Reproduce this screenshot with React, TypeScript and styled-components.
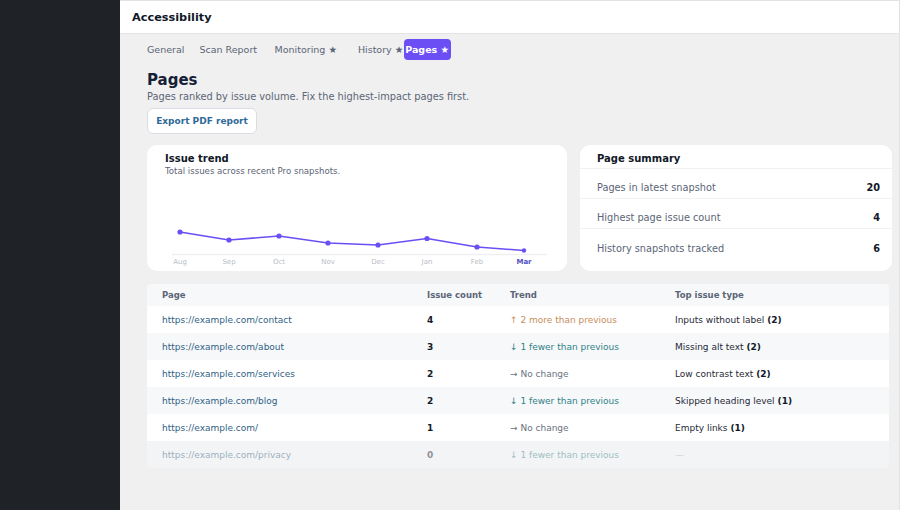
import React from "react";
import styled, { createGlobalStyle } from "styled-components";

const Global = createGlobalStyle`
  html, body { margin: 0; padding: 0; }
  body { font-family: "DejaVu Sans", Verdana, sans-serif; background: #f0f0f0; }
  * { box-sizing: border-box; }
`;

const Shell = styled.div`
  display: flex;
  width: 900px;
  height: 510px;
  overflow: hidden;
`;

const Sidebar = styled.aside`
  width: 120px;
  flex: none;
  background: #1f2327;
`;

const Main = styled.main`
  flex: 1;
  display: flex;
  flex-direction: column;
  background: #f0f0f0;
  border-top: 1px solid #e2e2e2;
  border-right: 1px solid #e2e2e2;
`;

const Header = styled.header`
  height: 33px;
  background: #ffffff;
  border-bottom: 1px solid #e4e4e4;
  display: flex;
  align-items: center;
  padding: 1px 0 0 12px;
  font-size: 11.3px;
  font-weight: 700;
  color: #111827;
`;

const Content = styled.div`
  padding: 4px 0 0 27px;
  display: flex;
  flex-direction: column;
`;

const Tabs = styled.nav`
  display: flex;
  align-items: center;
  height: 22px;
`;

const Tab = styled.span<{ $active?: boolean; $ml?: number }>`
  font-size: 9.5px;
  margin-left: ${(p) => p.$ml ?? 0}px;
  padding: ${(p) => (p.$active ? "0 2px 0 1px" : "0")};
  line-height: 21px;
  border-radius: 4px;
  color: ${(p) => (p.$active ? "#ffffff" : "#5b6576")};
  background: ${(p) => (p.$active ? "#6c4ef5" : "transparent")};
  font-weight: ${(p) => (p.$active ? 700 : 400)};
  white-space: pre;
`;

const Title = styled.h1`
  margin: 10px 0 0;
  font-size: 15px;
  font-weight: 700;
  color: #162036;
  line-height: 20px;
`;

const Sub = styled.p`
  margin: 0;
  font-size: 9.8px;
  color: #5b6576;
  line-height: 13px;
`;

const ExportButton = styled.button`
  margin-top: 5px;
  align-self: flex-start;
  height: 26px;
  width: 110px;
  padding: 0;
  background: #ffffff;
  border: 1px solid #d9dde3;
  border-radius: 6px;
  font-family: inherit;
  font-size: 9px;
  font-weight: 700;
  color: #2f6a99;
`;

const Cards = styled.div`
  margin-top: 11px;
  display: grid;
  grid-template-columns: 420px 312px;
  gap: 13px;
`;

const Card = styled.section`
  background: #ffffff;
  border-radius: 10px;
  height: 126px;
`;

const TrendCard = styled(Card)`
  padding: 7px 18px 0;
`;

const CardTitle = styled.h2`
  margin: 0;
  font-size: 10px;
  font-weight: 700;
  color: #111827;
  line-height: 13px;
`;

const CardSub = styled.p`
  margin: 0;
  font-size: 8.6px;
  color: #5b6576;
  line-height: 12px;
`;

const SummaryHead = styled.div`
  padding: 7px 17px 0;
  height: 24px;
  border-bottom: 1px solid #f1f2f4;
`;

const SummaryRow = styled.div<{ $last?: boolean }>`
  height: 30px;
  display: flex;
  align-items: center;
  justify-content: space-between;
  padding: 8px 12px 0 17px;
  border-bottom: ${(p) => (p.$last ? "none" : "1px solid #f1f2f4")};
  font-size: 9.75px;
  color: #5b6576;
  & > b { color: #111827; }
`;

const Table = styled.div`
  margin-top: 13px;
  width: 742px;
  border-radius: 4px;
  overflow: hidden;
`;

const Row = styled.div<{ $bg: string; $h: number; $muted?: boolean }>`
  display: grid;
  grid-template-columns: 265px 83px 165px 1fr;
  align-items: center;
  padding-left: 15px;
  height: ${(p) => p.$h}px;
  background: ${(p) => p.$bg};
  font-size: 9px;
  opacity: ${(p) => (p.$muted ? 0.45 : 1)};
`;

const HeadCell = styled.span`
  font-size: 8.5px;
  font-weight: 700;
  color: #5b6576;
`;

const PageLink = styled.span`
  color: #2f5f86;
`;

const Count = styled.span`
  font-weight: 700;
  color: #111827;
`;

const TrendText = styled.span<{ $c: string }>`
  color: ${(p) => p.$c};
`;

const IssueType = styled.span`
  color: #1f2937;
  & > b { color: #111827; }
`;

const Dash = styled.span`
  color: #9ca3af;
`;

const points = [
  { m: "Aug", x: 180, y: 232 },
  { m: "Sep", x: 229, y: 240 },
  { m: "Oct", x: 279, y: 236 },
  { m: "Nov", x: 328, y: 243 },
  { m: "Dec", x: 378, y: 245 },
  { m: "Jan", x: 427, y: 238.5 },
  { m: "Feb", x: 477, y: 247 },
  { m: "Mar", x: 524, y: 250.5 },
];

const OX = 165;
const OY = 177;

function Chart() {
  const pts = points.map((p) => ({ ...p, x: p.x - OX, y: p.y - OY }));
  const d = pts.map((p, i) => `${i ? "L" : "M"}${p.x} ${p.y}`).join(" ");
  return (
    <svg width="384" height="90" style={{ display: "block" }}>
      <line x1={172 - OX} x2={547 - OX} y1={254.5 - OY} y2={254.5 - OY} stroke="#eef0f3" strokeWidth="1.5" />
      <path d={d} fill="none" stroke="#6c4ef5" strokeWidth="1.6" strokeLinejoin="round" />
      {pts.map((p, i) => (
        <circle key={p.m} cx={p.x} cy={p.y} r={i === pts.length - 1 ? 2.2 : 2.6} fill="#6c4ef5" />
      ))}
      {pts.map((p, i) => (
        <text
          key={p.m + "t"}
          x={p.x}
          y={264 - OY}
          textAnchor="middle"
          fontSize="7"
          fontFamily="DejaVu Sans, sans-serif"
          fontWeight={i === pts.length - 1 ? 700 : 400}
          fill={i === pts.length - 1 ? "#4f4fc4" : "#b9bec7"}
        >
          {p.m}
        </text>
      ))}
    </svg>
  );
}

const UP = "#c98e5c";
const DOWN = "#2f8287";
const FLAT = "#6b7280";

const rows = [
  { url: "https://example.com/contact", n: 4, t: "↑ 2 more than previous", c: UP, issue: "Inputs without label", k: 2 },
  { url: "https://example.com/about", n: 3, t: "↓ 1 fewer than previous", c: DOWN, issue: "Missing alt text", k: 2 },
  { url: "https://example.com/services", n: 2, t: "→ No change", c: FLAT, issue: "Low contrast text", k: 2 },
  { url: "https://example.com/blog", n: 2, t: "↓ 1 fewer than previous", c: DOWN, issue: "Skipped heading level", k: 1 },
  { url: "https://example.com/", n: 1, t: "→ No change", c: FLAT, issue: "Empty links", k: 1 },
  { url: "https://example.com/privacy", n: 0, t: "↓ 1 fewer than previous", c: DOWN, issue: "", k: 0 },
];

export default function App() {
  return (
    <>
      <Global />
      <Shell>
        <Sidebar />
        <Main>
          <Header>Accessibility</Header>
          <Content>
            <Tabs>
              <Tab>General</Tab>
              <Tab $ml={15}>Scan Report</Tab>
              <Tab $ml={17.5}>Monitoring ★</Tab>
              <Tab $ml={21}>History ★</Tab>
              <Tab $active $ml={1}>Pages ★</Tab>
            </Tabs>
            <Title>Pages</Title>
            <Sub>Pages ranked by issue volume. Fix the highest-impact pages first.</Sub>
            <ExportButton>Export PDF report</ExportButton>
            <Cards>
              <TrendCard>
                <CardTitle>Issue trend</CardTitle>
                <CardSub>Total issues across recent Pro snapshots.</CardSub>
                <Chart />
              </TrendCard>
              <Card>
                <SummaryHead>
                  <CardTitle>Page summary</CardTitle>
                </SummaryHead>
                <SummaryRow>
                  <span>Pages in latest snapshot</span>
                  <b>20</b>
                </SummaryRow>
                <SummaryRow>
                  <span>Highest page issue count</span>
                  <b>4</b>
                </SummaryRow>
                <SummaryRow $last>
                  <span>History snapshots tracked</span>
                  <b>6</b>
                </SummaryRow>
              </Card>
            </Cards>
            <Table>
              <Row $bg="#f7f8fa" $h={22}>
                <HeadCell>Page</HeadCell>
                <HeadCell>Issue count</HeadCell>
                <HeadCell>Trend</HeadCell>
                <HeadCell>Top issue type</HeadCell>
              </Row>
              {rows.map((r, i) => (
                <Row key={r.url} $bg={i % 2 === 0 ? "#ffffff" : "#f7f8fa"} $h={27} $muted={r.n === 0}>
                  <PageLink>{r.url}</PageLink>
                  <Count>{r.n}</Count>
                  <TrendText $c={r.c}>{r.t}</TrendText>
                  <IssueType>
                    {r.issue ? (
                      <>
                        {r.issue} <b>({r.k})</b>
                      </>
                    ) : (
                      <Dash>—</Dash>
                    )}
                  </IssueType>
                </Row>
              ))}
            </Table>
          </Content>
        </Main>
      </Shell>
    </>
  );
}
